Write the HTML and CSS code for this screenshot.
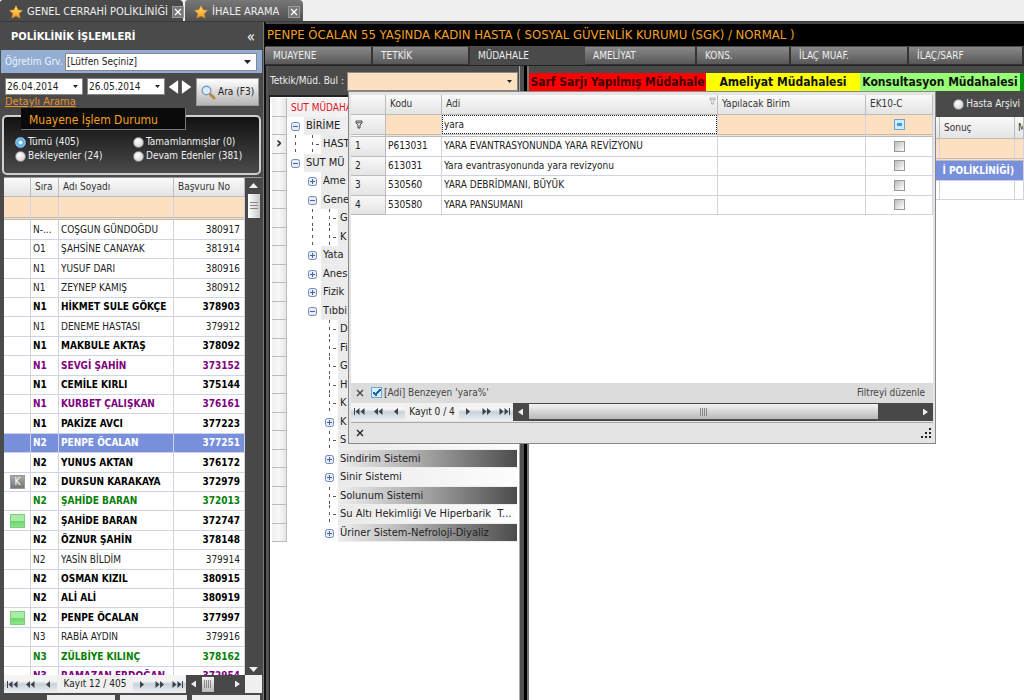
FILE: index.html
```html
<!DOCTYPE html>
<html lang="tr">
<head>
<meta charset="utf-8">
<title>Genel Cerrahi Polikliniği</title>
<link rel="stylesheet" href="styles.css">
</head>
<body>
<svg class="defs" width="0" height="0" aria-hidden="true">
  <defs>
    <linearGradient id="gold" x1="0" y1="0" x2="0" y2="1"><stop offset="0" stop-color="#ffe27a"/><stop offset="1" stop-color="#f79a1c"/></linearGradient>
    <symbol id="star" viewBox="0 0 14 14"><path d="M7 .6 9 4.800l4.600.6-3.400 3.100.9 4.700L7 10.900l-4.100 2.300.9-4.700L.4 5.400 5 4.800z" fill="url(#gold)" stroke="#d9801a" stroke-width=".5"/></symbol>
    <symbol id="cross" viewBox="0 0 12 12"><path d="M3 3l6 6M9 3l-6 6" stroke="currentColor" stroke-width="1.300" fill="none"/></symbol>
    <symbol id="down" viewBox="0 0 7 4"><path d="M0 0h7L3.500 4z" fill="currentColor"/></symbol>
    <symbol id="up" viewBox="0 0 9 5"><path d="M0 5h9L4.500 0z" fill="currentColor"/></symbol>
    <symbol id="left" viewBox="0 0 9 13"><path d="M9 0v13L0 6.500z" fill="currentColor"/></symbol>
    <symbol id="right" viewBox="0 0 9 13"><path d="M0 0v13L9 6.500z" fill="currentColor"/></symbol>
    <symbol id="first" viewBox="0 0 11 7"><path d="M0 0h1v7H0zM5.500 0v7L1.500 3.500zM10.500 0v7l-4-3.500z" fill="currentColor"/></symbol>
    <symbol id="back" viewBox="0 0 11 7"><path d="M5 0v7L1 3.500zM9.500 0v7l-4-3.500z" fill="currentColor"/></symbol>
    <symbol id="prev" viewBox="0 0 11 7"><path d="M7 0v7L3 3.500z" fill="currentColor"/></symbol>
    <symbol id="next" viewBox="0 0 11 7"><path d="M4 0v7l4-3.500z" fill="currentColor"/></symbol>
    <symbol id="forward" viewBox="0 0 11 7"><path d="M1.500 0v7l4-3.500zM6 0v7l4-3.500z" fill="currentColor"/></symbol>
    <symbol id="last" viewBox="0 0 11 7"><path d="M10 0h1v7h-1zM.5 0v7l4-3.500zM5.500 0v7l4-3.500z" fill="currentColor"/></symbol>
    <symbol id="funnel" viewBox="0 0 8 9"><path d="M1 1h6v2L5 5v3H3V5L1 3zM1.500 2.800h5" fill="none" stroke="currentColor" stroke-width=".8"/></symbol>
    <symbol id="plus" viewBox="0 0 11 11"><rect x="1.500" y="1.500" width="8" height="8" rx="2" fill="#e6edf8" stroke="#7288b5"/><path d="M3 5.500h5M5.500 3v5" stroke="#4a64a0"/></symbol>
    <symbol id="minus" viewBox="0 0 11 11"><rect x="1.500" y="1.500" width="8" height="8" rx="2" fill="#e6edf8" stroke="#7288b5"/><path d="M3 5.500h5" stroke="#4a64a0"/></symbol>
  </defs>
</svg>

<nav class="windows">
  <div class="window current"><svg width="14" height="14"><use href="#star"/></svg><span>GENEL CERRAHİ POLİKLİNİĞİ</span><button class="shut" aria-label="Kapat"><svg width="10" height="10" viewBox="1 1 10 10"><use href="#cross" width="12" height="12"/></svg></button></div>
  <div class="window other"><svg width="14" height="14"><use href="#star"/></svg><span>İHALE ARAMA</span><button class="shut" aria-label="Kapat"><svg width="10" height="10" viewBox="1 1 10 10"><use href="#cross" width="12" height="12"/></svg></button></div>
</nav>

<div class="workspace">
  <aside class="side">
    <header class="side-title"><h1>POLİKLİNİK İŞLEMLERİ</h1><button class="fold" aria-label="Daralt">«</button></header>
    <div class="doctor">
      <label for="doctor">Öğretim Grv.</label>
      <div class="combo"><select id="doctor"><option>[Lütfen Seçiniz]</option></select><svg width="7" height="4"><use href="#down"/></svg></div>
    </div>
    <div class="dates">
      <div class="date-part">
        <div class="date-line">
          <div class="combo date"><input type="text" value="26.04.2014" aria-label="Başlangıç tarihi"><svg width="5" height="3"><use href="#down"/></svg></div>
          <div class="combo date"><input type="text" value="26.05.2014" aria-label="Bitiş tarihi"><svg width="5" height="3"><use href="#down"/></svg></div>
          <button class="step" aria-label="Önceki"><svg width="11" height="14" viewBox="0 0 9 13"><use href="#left"/></svg></button>
          <button class="step" aria-label="Sonraki"><svg width="11" height="14" viewBox="0 0 9 13"><use href="#right"/></svg></button>
        </div>
        <a class="detail" href="#">Detaylı Arama</a>
      </div>
      <button class="search"><svg width="15" height="15" viewBox="0 0 15 15"><path d="M9 9l4 4" stroke="#b98a3c" stroke-width="3" stroke-linecap="round"/><circle cx="5.500" cy="5.500" r="4.300" fill="#d4ecfb" stroke="#7f9cb8" stroke-width="1.400"/></svg>Ara (F3)</button>
    </div>
    <fieldset class="status">
      <legend>Muayene İşlem Durumu</legend>
      <label><input type="radio" name="st" checked>Tümü (405)</label>
      <label><input type="radio" name="st">Tamamlanmışlar (0)</label>
      <label><input type="radio" name="st">Bekleyenler (24)</label>
      <label><input type="radio" name="st">Devam Edenler (381)</label>
    </fieldset>
    <div class="patients">
      <div class="viewport">
        <table class="grid">
          <colgroup><col class="c-icon"><col class="c-order"><col><col class="c-no"></colgroup>
          <thead>
            <tr><th></th><th>Sıra</th><th>Adı Soyadı</th><th>Başvuru No</th></tr>
            <tr class="filter"><td></td><td></td><td></td><td></td></tr>
          </thead>
          <tbody>
            <tr><td></td><td>N-...</td><td>COŞGUN GÜNDOĞDU</td><td>380917</td></tr>
            <tr><td></td><td>O1</td><td>ŞAHSİNE CANAYAK</td><td>381914</td></tr>
            <tr><td></td><td>N1</td><td>YUSUF DARI</td><td>380916</td></tr>
            <tr><td></td><td>N1</td><td>ZEYNEP KAMIŞ</td><td>380912</td></tr>
            <tr class="b"><td></td><td>N1</td><td>HİKMET SULE GÖKÇE</td><td>378903</td></tr>
            <tr><td></td><td>N1</td><td>DENEME HASTASI</td><td>379912</td></tr>
            <tr class="b"><td></td><td>N1</td><td>MAKBULE AKTAŞ</td><td>378092</td></tr>
            <tr class="b purple"><td></td><td>N1</td><td>SEVGİ ŞAHİN</td><td>373152</td></tr>
            <tr class="b"><td></td><td>N1</td><td>CEMİLE KIRLI</td><td>375144</td></tr>
            <tr class="b purple"><td></td><td>N1</td><td>KURBET ÇALIŞKAN</td><td>376161</td></tr>
            <tr class="b"><td></td><td>N1</td><td>PAKİZE AVCI</td><td>377223</td></tr>
            <tr class="b picked"><td></td><td>N2</td><td>PENPE ÖCALAN</td><td>377251</td></tr>
            <tr class="b"><td></td><td>N2</td><td>YUNUS AKTAN</td><td>376172</td></tr>
            <tr class="b"><td><span class="mark">K</span></td><td>N2</td><td>DURSUN KARAKAYA</td><td>372979</td></tr>
            <tr class="b green"><td></td><td>N2</td><td>ŞAHİDE BARAN</td><td>372013</td></tr>
            <tr class="b"><td><span class="mark ok"></span></td><td>N2</td><td>ŞAHİDE BARAN</td><td>372747</td></tr>
            <tr class="b"><td></td><td>N2</td><td>ÖZNUR ŞAHİN</td><td>378148</td></tr>
            <tr><td></td><td>N2</td><td>YASİN BİLDİM</td><td>379914</td></tr>
            <tr class="b"><td></td><td>N2</td><td>OSMAN KIZIL</td><td>380915</td></tr>
            <tr class="b"><td></td><td>N2</td><td>ALİ ALİ</td><td>380919</td></tr>
            <tr class="b"><td><span class="mark ok"></span></td><td>N2</td><td>PENPE ÖCALAN</td><td>377997</td></tr>
            <tr><td></td><td>N3</td><td>RABİA AYDIN</td><td>379916</td></tr>
            <tr class="b green"><td></td><td>N3</td><td>ZÜLBİYE KILINÇ</td><td>378162</td></tr>
            <tr class="b purple"><td></td><td>N3</td><td>RAMAZAN ERDOĞAN</td><td>372954</td></tr>
          </tbody>
        </table>
      </div>
      <div class="vscroll"><svg width="9" height="5"><use href="#up"/></svg><span class="vthumb"></span><svg class="end" width="9" height="5"><use href="#down"/></svg></div>
    </div>
    <div class="pager">
      <div class="moves"><button aria-label="İlk"><svg width="11" height="7"><use href="#first"/></svg></button><button aria-label="Geri"><svg width="11" height="7"><use href="#back"/></svg></button><button aria-label="Önceki"><svg width="11" height="7"><use href="#prev"/></svg></button></div>
      <span class="count">Kayıt 12 / 405</span>
      <div class="moves"><button aria-label="Sonraki"><svg width="11" height="7"><use href="#next"/></svg></button><button aria-label="İleri"><svg width="11" height="7"><use href="#forward"/></svg></button><button aria-label="Son"><svg width="11" height="7"><use href="#last"/></svg></button></div>
      <div class="hscroll"><svg width="5" height="8" viewBox="0 0 9 13"><use href="#left"/></svg><span class="hthumb small"></span><svg class="end" width="5" height="8" viewBox="0 0 9 13"><use href="#right"/></svg></div>
    </div>
    <div class="side-foot"><span></span><span></span><span></span></div>
  </aside>

  <div class="split"></div>

  <main class="main">
    <h2 class="patient">PENPE ÖCALAN 55 YAŞINDA KADIN HASTA ( SOSYAL GÜVENLİK KURUMU (SGK) / NORMAL )</h2>
    <nav class="tabs">
      <button>MUAYENE</button><button>TETKİK</button><button class="on">MÜDAHALE</button><button>AMELİYAT</button><button>KONS.</button><button>İLAÇ MUAF.</button><button>İLAÇ/SARF</button>
    </nav>
    <div class="panes">
      <section class="left-pane">
        <div class="find">
          <label for="find">Tetkik/Müd. Bul :</label>
          <div class="find-box">
            <div class="combo peach"><select id="find"><option></option></select><svg width="5" height="3"><use href="#down"/></svg></div>
            <div class="popup">
              <div class="popup-body">
                <table class="grid results">
                  <colgroup><col class="r-n"><col class="r-code"><col><col class="r-unit"><col class="r-ek"></colgroup>
                  <thead>
                    <tr><th></th><th>Kodu</th><th><span class="head">Adi<svg width="7" height="8"><use href="#funnel"/></svg></span></th><th>Yapılacak Birim</th><th>EK10-C</th></tr>
                    <tr class="filter"><td class="num"><svg width="8" height="9"><use href="#funnel"/></svg></td><td></td><td class="edit"><input type="text" value="yara" aria-label="Adi" autofocus></td><td></td><td><input class="mixed" type="checkbox" aria-label="EK10-C"></td></tr>
                  </thead>
                  <tbody>
                    <tr><td class="num">1</td><td>P613031</td><td>YARA EVANTRASYONUNDA YARA REVİZYONU</td><td></td><td><input type="checkbox" aria-label="EK10-C"></td></tr>
                    <tr><td class="num">2</td><td>613031</td><td>Yara evantrasyonunda yara revizyonu</td><td></td><td><input type="checkbox" aria-label="EK10-C"></td></tr>
                    <tr><td class="num">3</td><td>530560</td><td>YARA DEBRİDMANI, BÜYÜK</td><td></td><td><input type="checkbox" aria-label="EK10-C"></td></tr>
                    <tr><td class="num">4</td><td>530580</td><td>YARA PANSUMANI</td><td></td><td><input type="checkbox" aria-label="EK10-C"></td></tr>
                  </tbody>
                </table>
              </div>
              <div class="filter-bar"><button aria-label="Temizle"><svg width="12" height="12"><use href="#cross"/></svg></button><label><input class="tick" type="checkbox" checked>[Adi] Benzeyen 'yara%'</label><button class="edit-filter">Filtreyi düzenle</button></div>
              <div class="pager">
                <div class="moves"><button aria-label="İlk"><svg width="11" height="7"><use href="#first"/></svg></button><button aria-label="Geri"><svg width="11" height="7"><use href="#back"/></svg></button><button aria-label="Önceki"><svg width="11" height="7"><use href="#prev"/></svg></button></div>
                <span class="count short">Kayıt 0 / 4</span>
                <div class="moves"><button aria-label="Sonraki"><svg width="11" height="7"><use href="#next"/></svg></button><button aria-label="İleri"><svg width="11" height="7"><use href="#forward"/></svg></button><button aria-label="Son"><svg width="11" height="7"><use href="#last"/></svg></button></div>
                <div class="hscroll"><svg width="5" height="8" viewBox="0 0 9 13"><use href="#left"/></svg><span class="hthumb"></span><svg class="end" width="5" height="8" viewBox="0 0 9 13"><use href="#right"/></svg></div>
              </div>
              <div class="popup-foot"><button aria-label="Kapat"><svg width="12" height="12"><use href="#cross"/></svg></button><svg width="10" height="10" viewBox="0 0 10 10"><path d="M8 0h2v2H8zM4 4h2v2H4zM8 4h2v2H8zM0 8h2v2H0zM4 8h2v2H4zM8 8h2v2H8z" fill="#222"/></svg></div>
            </div>
          </div>
        </div>
        <div class="tree">
          <div class="tree-head"><i class="ind"></i><span>SUT MÜDAHA</span></div>
          <ul>
            <li><i class="ind"></i><svg class="knob" width="11" height="11"><use href="#minus"/></svg><span>BİRİME</span></li>
            <li><i class="ind here">›</i><i class="v"></i><i class="v h"></i><span>HAST</span></li>
            <li><i class="ind"></i><svg class="knob" width="11" height="11"><use href="#minus"/></svg><span>SUT MÜ</span></li>
            <li><i class="ind"></i><i></i><svg class="knob" width="11" height="11"><use href="#plus"/></svg><span>Ame</span></li>
            <li><i class="ind"></i><i></i><svg class="knob" width="11" height="11"><use href="#minus"/></svg><span>Gene</span></li>
            <li><i class="ind"></i><i></i><i class="v"></i><i class="v h"></i><span>G</span></li>
            <li><i class="ind"></i><i></i><i class="v"></i><i class="v h"></i><span>K</span></li>
            <li><i class="ind"></i><i></i><svg class="knob" width="11" height="11"><use href="#plus"/></svg><span>Yata</span></li>
            <li><i class="ind"></i><i></i><svg class="knob" width="11" height="11"><use href="#plus"/></svg><span>Anes</span></li>
            <li><i class="ind"></i><i></i><svg class="knob" width="11" height="11"><use href="#plus"/></svg><span>Fizik</span></li>
            <li><i class="ind"></i><i></i><svg class="knob" width="11" height="11"><use href="#minus"/></svg><span>Tıbbi</span></li>
            <li><i class="ind"></i><i></i><i></i><i class="v h"></i><span>D</span></li>
            <li><i class="ind"></i><i></i><i></i><i class="v h"></i><span>Fi</span></li>
            <li><i class="ind"></i><i></i><i></i><i class="v h"></i><span>G</span></li>
            <li><i class="ind"></i><i></i><i></i><i class="v h"></i><span>H</span></li>
            <li><i class="ind"></i><i></i><i></i><i class="v h"></i><span>K</span></li>
            <li><i class="ind"></i><i></i><i></i><svg class="knob" width="11" height="11"><use href="#plus"/></svg><span>K</span></li>
            <li><i class="ind"></i><i></i><i></i><i class="v h"></i><span>S</span></li>
            <li class="dark"><i class="ind"></i><i></i><i></i><svg class="knob" width="11" height="11"><use href="#plus"/></svg><span>Sindirim Sistemi</span></li>
            <li><i class="ind"></i><i></i><i></i><svg class="knob" width="11" height="11"><use href="#plus"/></svg><span>Sinir Sistemi</span></li>
            <li class="dark"><i class="ind"></i><i></i><i></i><i class="v h"></i><span>Solunum Sistemi</span></li>
            <li><i class="ind"></i><i></i><i></i><i class="v h"></i><span>Su Altı Hekimliği Ve Hiperbarik&nbsp; T...</span></li>
            <li class="dark"><i class="ind"></i><i></i><i></i><svg class="knob" width="11" height="11"><use href="#plus"/></svg><span>Üriner Sistem-Nefroloji-Diyaliz</span></li>
          </ul>
        </div>
      </section>
      <div class="split inner"></div>
      <section class="right-pane">
        <div class="keys"><span class="red">Sarf Sarjı Yapılmış Müdahale</span><span class="yellow">Ameliyat Müdahalesi</span><span class="lime">Konsultasyon Müdahalesi</span><span class="deep"></span></div>
        <div class="archive"><label><input type="radio" name="archive">Hasta Arşivi</label></div>
        <table class="grid history">
          <colgroup><col><col class="h-result"><col class="h-more"></colgroup>
          <thead>
            <tr><th></th><th>Sonuç</th><th>M</th></tr>
            <tr class="filter"><td></td><td></td><td></td></tr>
          </thead>
          <tbody>
            <tr class="b picked"><td colspan="3">İ POLİKLİNİĞİ)</td></tr>
            <tr><td></td><td></td><td></td></tr>
          </tbody>
        </table>
      </section>
    </div>
  </main>
</div>
</body>
</html>
```

FILE: styles.css
```css
* { box-sizing: border-box; }
body {
  margin: 0;
  height: 100vh;
  display: flex;
  flex-direction: column;
  overflow: hidden;
  background: #4a4a4a;
  color: #222;
  font: 10px/14px "DejaVu Sans Condensed", "DejaVu Sans", sans-serif;
}
button, input, select { font: inherit; color: inherit; margin: 0; padding: 0; border: 0; background: none; border-radius: 0; }
svg { flex: none; display: block; }
.defs { position: absolute; }
h1, h2, ul { margin: 0; padding: 0; }
i { font-style: normal; }

/* window tabs */
.windows { display: flex; height: 22px; background: #efefef; border-bottom: 1px solid #3a3a3a; flex: none; gap: 2px; }
.window { display: flex; align-items: center; gap: 4px; padding: 3px 3px 0 9px; color: #eee; background: #4a4a4a; border-radius: 3px 4px 0 0; font-size: 11px; white-space: nowrap; }
.window.current { width: 183px; }
.window.other { width: 118px; background: linear-gradient(#777, #505050); }
.window span { flex: 1; }
.shut { flex: none; width: 12px; background: #777; color: #fff; border: 1px solid #999; }

.workspace { display: flex; flex: 1; min-height: 0; }
.side { width: 263px; display: flex; flex-direction: column; flex: none; padding: 0 1px; }
.side-title { display: flex; justify-content: space-between; align-items: center; height: 28px; padding: 2px 7px 0 10px; color: #fff; }
.side-title h1 { font-size: 11px; }
.fold { font-size: 15px; }
.doctor { display: flex; align-items: center; justify-content: space-between; height: 23px; background: #93aed2; padding: 0 5px 0 4px; color: #eef4fc; }
.combo { display: flex; align-items: center; background: #fff; color: #222; padding-right: 5px; border: 1px solid #888; height: 17px; }
.doctor .combo { width: 192px; height: 18px; }
.combo select, .combo input { appearance: none; flex: 1; min-width: 0; padding-left: 1px; outline: 0; height: 100%; }
.dates { display: flex; justify-content: space-between; padding: 5px 3px 0 4px; height: 35px; }
.date-line { display: flex; gap: 4px; align-items: center; }
.date { width: 78px; padding-right: 4px; }
.step { color: #fff; width: 11px; margin: 0 -1px; }
.detail { display: block; color: #e8902a; font-size: 11px; line-height: 14px; }
.search { display: flex; align-items: center; gap: 2px; height: 28px; width: 63px; padding-left: 4px; background: linear-gradient(#fff, #b5b5b5); border: 1px solid #999; white-space: nowrap; }
.status { position: relative; display: grid; grid-template-columns: 118px 1fr; align-content: start; margin: 7px 1px 0 1px; padding: 18px 4px 0 11px; height: 60px; border: 2px solid #d0d0d0; border-radius: 5px; background: linear-gradient(#111, #4a4a4a); color: #f0f0f0; }
.status legend { position: absolute; left: 17px; top: -9px; width: 165px; padding: 5px 8px 1px; background: #0a0a0a; border: solid #777; border-width: 0 1px 1px 0; color: #f5a01e; font-size: 12px; line-height: 15px; }
label { display: flex; align-items: center; gap: 2px; white-space: nowrap; }
input[type="radio"] { appearance: none; width: 11px; height: 11px; border-radius: 50%; background: radial-gradient(circle at 40% 35%, #fff, #c8c8c8); border: 1px solid #8a8a8a; flex: none; }
input[type="radio"]:checked { background: radial-gradient(#fff 15%, #4aa8e8 45%, #cfeafa); border-color: #7fb4dc; }

/* data grids */
.grid { border-collapse: separate; border-spacing: 0; table-layout: fixed; width: 100%; background: #fff; }
.grid th { height: 19px; font-weight: normal; text-align: left; background: linear-gradient(#fafafa, #e4e4e4); border: solid #bbb; border-width: 0 1px 1px 0; padding: 0 4px; color: #333; }
.grid td { height: 19px; padding: 0 2px; border: solid #d0d3e4; border-width: 0 1px 1px 0; white-space: nowrap; overflow: hidden; }
.grid tbody tr:nth-child(5n+1) td, .grid tbody tr:nth-child(5n+3) td { height: 20px; }
.grid .filter td { height: 22px; background: #fde0c0; border-bottom: 3px double #bbb; }
.b { font-weight: bold; color: #000; }
.purple { color: #800080; }
.green { color: #068006; }
.grid .picked td { background: #7890dc; color: #fff; }
.patients { display: flex; flex: 1; min-height: 0; margin: 2px 0 0 3px; border-top: 1px solid #999; }
.patients .filter td { height: 23px; }
.viewport { flex: 1; overflow: hidden; background: #fff; }
.c-icon { width: 27px; } .c-order { width: 28px; } .c-no { width: 71px; }
.patients tbody td:last-child { text-align: right; padding-right: 4px; }
.mark { display: block; width: 15px; height: 14px; margin-left: 4px; border: 1px solid #999; background: linear-gradient(#aaa, #777); color: #fff; text-align: center; font: 10px/12px "DejaVu Sans Condensed", sans-serif; }
.mark.ok { background: linear-gradient(#a8eca8 48%, #6cd86c 52%, #8ce48c); border-color: #7ccf7c; }
.vscroll { width: 17px; background: #484848; display: flex; flex-direction: column; align-items: center; padding: 5px 1px 3px; color: #eee; }
.vthumb { width: 12px; height: 24px; margin-top: 6px; background: repeating-linear-gradient(#888 0 1px, transparent 1px 3px) center / 8px 9px no-repeat, linear-gradient(90deg, #fff, #c8c8c8); }
.end { margin-top: auto; }

.pager { display: flex; height: 18px; flex: none; background: #f0f0f0; }
.side .pager { margin-left: 3px; }
.moves { display: flex; align-items: center; justify-content: space-between; width: 54px; padding: 0 3px; color: #38434c; background: linear-gradient(#f4f4f4 35%, #c8d0d8 50%, #eef2f5); }
.count { width: 76px; text-align: center; line-height: 18px; white-space: nowrap; }
.count.short { width: 54px; }
.side .moves { width: 53px; }
.hscroll { flex: 1; display: flex; align-items: center; gap: 6px; padding: 1px 5px; background: #484848; color: #eee; }
.hthumb { flex: 1; height: 15px; margin-right: 39px; background: repeating-linear-gradient(90deg, #888 0 1px, transparent 1px 2px) center / 8px 8px no-repeat, linear-gradient(#f4f4f4, #b8b8b8); }
.hthumb.small { flex: none; width: 12px; margin: 0; }
.hscroll .end { margin: 0 0 0 auto; }
.side .hscroll { margin-right: 17px; }
.side-foot { display: flex; height: 7px; gap: 5px; padding: 2px 2px 0 46px; }
.side-foot span { flex: 1; background: #eee; }

.split { width: 5px; flex: none; background: linear-gradient(90deg, #777 0 1px, #111 1px 3px, #555 3px); }
.split.inner { width: 10px; background: linear-gradient(90deg, #aaa 0 1px, #505050 1px 5px, #000 5px 8px, #777 8px); }

/* main area */
.main { flex: 1; min-width: 0; display: flex; flex-direction: column; margin-left: -3px; padding-top: 2px; }
.patient { background: #000; color: #f5a020; font-size: 13px; font-weight: normal; line-height: 22px; padding-left: 2px; white-space: nowrap; overflow: hidden; flex: none; }
.tabs { display: grid; grid-template-columns: 108fr 97fr 115fr 112fr 94fr 118fr 115fr; height: 19px; padding-top: 1px; flex: none; }
.tabs button { text-align: left; padding-left: 8px; color: #eee; background: linear-gradient(#888, #585858); border: solid #333; border-width: 0 2px 1px 0; }
.tabs .on { background: none; border-color: transparent; }
.panes { display: flex; flex: 1; min-height: 0; border-top: 1px solid #222; }
.left-pane { width: 254px; flex: none; display: flex; flex-direction: column; padding-left: 4px; }
.find { display: flex; align-items: center; height: 29px; padding-top: 1px; color: #eee; }
.find label { width: 78px; padding-left: 1px; }
.find-box { position: relative; width: 171px; color: #222; }
.combo.peach { background: #fde0c0; height: 19px; }
.tree { flex: 1; background: #fff; padding: 1px 2px 0 2px; border-top: 2px solid #222; border-left: 1px solid #222; }
.tree-head, .tree li { display: flex; align-items: stretch; }
.tree-head { height: 19px; line-height: 19px; color: #e0101c; background: #f2f2f2; }
.tree-head span { padding-left: 4px; }
.tree ul { list-style: none; font-size: 11px; }
.tree li { height: 18px; line-height: 17px; }
.tree li:nth-child(even) { height: 19px; }
.tree li i { width: 17px; flex: none; }
.tree .ind { width: 15px; flex: none; border: solid #bbb; border-width: 0 1px 1px 0; background: linear-gradient(90deg, #eee, #f8f8f8 50%, #e6e6e6); }
.tree .here { font-size: 16px; line-height: 15px; text-align: center; font-weight: bold; }
.tree .knob { margin: 4px 3px 0; }
.tree .v { background: repeating-linear-gradient(#556 0 3px, transparent 3px 7px) 8px 0 / 1px 100% no-repeat; }
.tree .v.h { background: repeating-linear-gradient(#556 0 3px, transparent 3px 7px) 8px 0 / 1px 100% no-repeat, linear-gradient(#556, #556) 12px 9px / 3px 1px no-repeat; }
.tree li span { flex: 1; padding-left: 2px; white-space: nowrap; overflow: hidden; background: linear-gradient(90deg, #eaeaea, #fdfdfd); border-bottom: 1px solid #eee; }
.tree .dark span { background: linear-gradient(90deg, #eee, #bbb 35%, #4c4c4c); }

.right-pane { flex: 1; min-width: 0; display: flex; flex-direction: column; background: #fff; }
.keys { display: flex; height: 25px; padding-top: 7px; background: #4a4a4a; color: #111; font: bold 12px/19px "DejaVu Sans Condensed", sans-serif; flex: none; }
.keys span { text-align: center; white-space: nowrap; overflow: hidden; }
.red { flex: 177; background: #f00; color: #400000; }
.yellow { flex: 154; background: #ff0; }
.lime { flex: 160; background: #9f7; }
.deep { flex: 4; background: #009a10; }
.archive { display: flex; justify-content: flex-end; height: 26px; padding-right: 4px; background: #4a4a4a; color: #eee; flex: none; }
.h-result { width: 75px; } .h-more { width: 9px; }
.history th { height: 22px; }
.history th:last-child { padding: 0 3px; overflow: hidden; }
.history .picked td { text-align: right; padding-right: 9px; }

/* search result popup */
.popup { position: absolute; z-index: 2; left: 1px; top: 19px; width: 588px; padding: 3px 2px 0; background: #e4e4e4; border: 1px solid #888; }
.popup-body { height: 288px; background: #fff; }
.r-n { width: 35px; } .r-code { width: 56px; } .r-unit { width: 148px; } .r-ek { width: 67px; }
.results th { height: 20px; }
.grid td.num { background: linear-gradient(#f8f8f8, #e4e4e4); padding-left: 4px; border-color: #bbb; }
.head { display: flex; justify-content: space-between; color: inherit; }
.head svg { color: #999; margin-right: -3px; }
.results td.edit { padding: 0; background: #fff; }
.edit input { display: block; width: 100%; height: 19px; border: 1px dotted #222; padding-left: 1px; outline: 0; }
input[type="checkbox"] { appearance: none; display: block; flex: none; width: 11px; height: 11px; margin: 0 auto; border: 1px solid #999; background: linear-gradient(135deg, #bbb, #fff); }
input.mixed { border-color: #68a8d8; background: linear-gradient(#3c9cdc, #3c9cdc) center / 5px 3px no-repeat, #cfeafa; }
input[type="checkbox"].tick { margin: 0; background: linear-gradient(-45deg, transparent 42%, #1e66b8 42% 62%, transparent 62%) 3px 1px / 6px 7px no-repeat, linear-gradient(45deg, transparent 35%, #1e66b8 35% 65%, transparent 65%) 1px 4px / 4px 4px no-repeat, #dceefa; border-color: #68a8d8; }
.filter-bar { display: flex; align-items: center; gap: 4px; height: 20px; padding: 0 8px 0 3px; background: #dcdcdc; color: #444; }
.edit-filter { margin-left: auto; }
.popup-foot { display: flex; align-items: center; justify-content: space-between; height: 21px; padding: 1px 2px 0 3px; margin-top: 1px; border-top: 1px solid #aaa; }
```
